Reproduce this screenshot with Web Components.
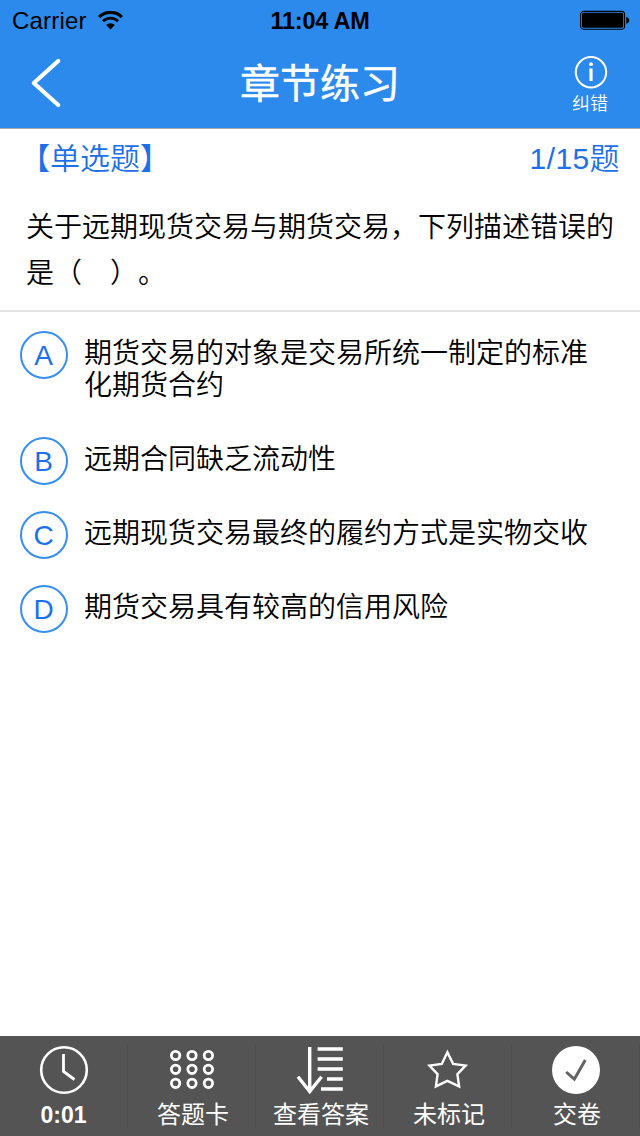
<!DOCTYPE html>
<html lang="zh-CN">
<head>
<meta charset="utf-8">
<title>章节练习</title>
<style>
html, body { margin: 0; height: 100%; }
body { font-family: "Liberation Sans", "Noto Sans CJK SC", sans-serif; background: #fff; color: #000; overflow: hidden; text-spacing-trim: space-all; }
</style>
</head>
<body>
<quiz-app></quiz-app>
<script>
const define = (name, html) => {
  const t = document.createElement('template');
  t.innerHTML = html;
  customElements.define(name, class extends HTMLElement {
    constructor() {
      super();
      this.attachShadow({ mode: 'open' }).append(t.content.cloneNode(true));
    }
  });
};

define('status-bar', `
<style>
:host { display: grid; grid-template-columns: 1fr auto 1fr; align-items: center; height: 40px; box-sizing: border-box; padding: 0 10px 0 12px; font-size: 24px; line-height: 40px; }
.left { display: flex; align-items: center; gap: 11px; }
.carrier { letter-spacing: 0.2px; padding-top: 2px; line-height: 38px; }
.time { font-weight: 700; font-size: 23.5px; letter-spacing: -0.25px; line-height: 38px; padding: 2px 2px 0 0; }
.right { display: flex; justify-content: flex-end; }
svg { display: block; }
</style>
<div class="left"><span class="carrier">Carrier</span>
<svg width="25" height="19" viewBox="0 0 25 19"><path d="M1.2 6.1A16 16 0 0 1 23.8 6.1" fill="none" stroke="#000" stroke-width="3.2"/><path d="M5 10.2A10.6 10.6 0 0 1 20 10.2" fill="none" stroke="#000" stroke-width="2.8"/><path d="M8.2 14A6.3 6.3 0 0 1 16.8 14L12.5 18.4Z"/></svg></div>
<div class="time"><slot></slot></div>
<div class="right"><svg width="50" height="20" viewBox="0 0 50 20"><rect x=".6" y="1.4" width="44" height="17.8" rx="3.2" fill="none" stroke="#000" stroke-width="1.1"/><rect x="2" y="2.8" width="41.2" height="15" rx="1.8"/><path d="M46.3 6.9C50.2 7.5 50.2 13.1 46.3 13.7Z"/></svg></div>`);

define('nav-bar', `
<style>
:host { display: grid; grid-template-columns: 1fr auto 1fr; height: 88px; border-bottom: 1px solid #a5a9ae; color: #fff; }
.back { padding: 18px 0 0 30px; }
.title { font-size: 40px; line-height: 88px; height: 88px; font-weight: 400; -webkit-text-stroke: 0.4px #fff; }
.report { justify-self: end; width: 100px; display: flex; flex-direction: column; align-items: center; padding-top: 15px; font-size: 18px; line-height: 30px; font-weight: 350; }
svg { display: block; }
.report svg { margin-left: 1px; }
</style>
<div class="back"><svg width="32" height="50" viewBox="0 0 32 50"><path d="M28.2 3L3.8 25L28.2 47" fill="none" stroke="#fff" stroke-width="4.2" stroke-linecap="round" stroke-linejoin="round"/></svg></div>
<div class="title"><slot></slot></div>
<div class="report"><svg width="34" height="34" viewBox="0 0 34 34"><circle cx="17" cy="17.3" r="15.2" fill="none" stroke="#fff" stroke-width="2"/><circle cx="17" cy="9.2" r="1.9" fill="#fff"/><path d="M17 13.5V26" stroke="#fff" stroke-width="3.2"/></svg><slot name="action"></slot></div>`);

define('quiz-question', `
<style>
:host { display: block; height: 181px; border-bottom: 2px solid #e2e2e2; }
.meta { display: flex; justify-content: space-between; padding: 0 20px; color: #1d70e6; font-size: 30px; line-height: 60px; font-weight: 350; }
.num { letter-spacing: 0.4px; }
.body { padding: 16px 20px 0 26px; font-size: 28px; line-height: 46px; font-weight: 350; white-space: pre-line; }
</style>
<div class="meta"><slot name="kind"></slot><span class="num"><slot name="progress"></slot></span></div>
<div class="body"><slot></slot></div>`);

define('quiz-option', `
<style>
:host { display: flex; gap: 16px; padding: 0 20px; }
.badge { flex: none; box-sizing: border-box; width: 48px; height: 48px; border: 2px solid #368eef; border-radius: 50%; color: #1b70eb; font-size: 28px; line-height: 45px; text-align: center; text-indent: -1px; }
.text { padding-top: 7px; font-size: 28px; line-height: 32px; font-weight: 350; white-space: pre-line; }
</style>
<div class="badge"><slot name="key"></slot></div>
<div class="text"><slot></slot></div>`);

define('tool-item', `
<style>
:host { display: flex; flex-direction: column; align-items: center; height: 100px; color: #fff; font-size: 24px; line-height: 36px; font-weight: 400; background: linear-gradient(#4d4d4d, #4d4d4d) right 0 top 8px / 1px 84px no-repeat; }
.icon { display: block; width: 50px; height: 50px; margin-top: 9px; }
.label { margin-top: 2px; padding-left: 2px; }
</style>
<div class="icon"><slot name="icon"></slot></div>
<div class="label"><slot></slot></div>`);

define('quiz-app', `
<style>
:host { display: flex; flex-direction: column; width: 640px; height: 1136px; }
header { background: #2c8aec; }
.options { flex: 1; display: flex; flex-direction: column; gap: 26px; padding-top: 19px; }
.options quiz-option:first-child { min-height: 80px; }
footer { display: grid; grid-template-columns: repeat(5, 128px); height: 100px; background: #545454; }
svg { display: block; fill: none; stroke: #fff; }
.bold { display: block; font-weight: 700; font-size: 23px; margin: 0 3px 0 0; }
</style>
<header><status-bar>11:04 AM</status-bar><nav-bar>章节练习<span slot="action">纠错</span></nav-bar></header>
<quiz-question><span slot="kind">【单选题】</span><span slot="progress">1/15题</span>关于远期现货交易与期货交易，下列描述错误的
是（　）。</quiz-question>
<div class="options">
<quiz-option><span slot="key">A</span>期货交易的对象是交易所统一制定的标准
化期货合约</quiz-option>
<quiz-option><span slot="key">B</span>远期合同缺乏流动性</quiz-option>
<quiz-option><span slot="key">C</span>远期现货交易最终的履约方式是实物交收</quiz-option>
<quiz-option><span slot="key">D</span>期货交易具有较高的信用风险</quiz-option>
</div>
<footer>
<tool-item><svg slot="icon" width="50" height="50" viewBox="0 0 50 50"><circle cx="25" cy="25" r="22.8" stroke-width="2.6"/><path d="M24.5 9V26.5L35.5 34.5" stroke-width="2.8"/></svg><span class="bold">0:01</span></tool-item>
<tool-item><svg slot="icon" width="50" height="50" viewBox="0 0 50 50" stroke-width="2.8"><circle cx="8.6" cy="10.5" r="4.2"/><circle cx="25" cy="10.5" r="4.2"/><circle cx="41.4" cy="10.5" r="4.2"/><circle cx="8.6" cy="24.3" r="4.2"/><circle cx="25" cy="24.3" r="4.2"/><circle cx="41.4" cy="24.3" r="4.2"/><circle cx="8.6" cy="38.3" r="4.2"/><circle cx="25" cy="38.3" r="4.2"/><circle cx="41.4" cy="38.3" r="4.2"/></svg>答题卡</tool-item>
<tool-item><svg slot="icon" width="50" height="50" viewBox="0 0 50 50" stroke-width="3.4"><path d="M14.7 2V46M3 31.8L14.7 46.6L26.6 31.8"/><path d="M22.6 4H47.8M22.6 14H47.8M22.6 24H47.8M32 34H47.8M26 44H47.8"/></svg>查看答案</tool-item>
<tool-item><svg slot="icon" width="50" height="50" viewBox="0 0 50 50"><path d="M24.4 7.2L30.1 18.9L42.6 20.6L34.4 29.2L36.1 41.4L24.4 35.8L12.9 41.4L14.6 29.2L6.4 20.6L18.8 18.9Z" stroke-width="2.4"/></svg>未标记</tool-item>
<tool-item><svg slot="icon" width="50" height="50" viewBox="0 0 50 50"><circle cx="25" cy="25" r="24" fill="#fff" stroke="none"/><path d="M15.2 27L23.3 34.2L34.3 15" stroke="#646464" stroke-width="3"/></svg>交卷</tool-item>
</footer>`);
</script>
</body>
</html>
